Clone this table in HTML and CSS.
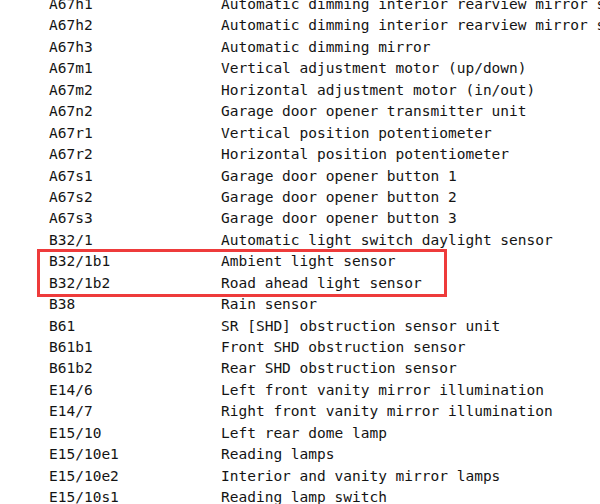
FILE: index.html
```html
<!DOCTYPE html>
<html>
<head>
<meta charset="utf-8">
<link rel="stylesheet" href="styles.css">
</head>
<body>
<div class="list">
  <div class="row"><span class="code">A67h1</span><span class="desc">Automatic dimming interior rearview mirror switch</span></div>
  <div class="row"><span class="code">A67h2</span><span class="desc">Automatic dimming interior rearview mirror sensor</span></div>
  <div class="row"><span class="code">A67h3</span><span class="desc">Automatic dimming mirror</span></div>
  <div class="row"><span class="code">A67m1</span><span class="desc">Vertical adjustment motor (up/down)</span></div>
  <div class="row"><span class="code">A67m2</span><span class="desc">Horizontal adjustment motor (in/out)</span></div>
  <div class="row"><span class="code">A67n2</span><span class="desc">Garage door opener transmitter unit</span></div>
  <div class="row"><span class="code">A67r1</span><span class="desc">Vertical position potentiometer</span></div>
  <div class="row"><span class="code">A67r2</span><span class="desc">Horizontal position potentiometer</span></div>
  <div class="row"><span class="code">A67s1</span><span class="desc">Garage door opener button 1</span></div>
  <div class="row"><span class="code">A67s2</span><span class="desc">Garage door opener button 2</span></div>
  <div class="row"><span class="code">A67s3</span><span class="desc">Garage door opener button 3</span></div>
  <div class="row"><span class="code">B32/1</span><span class="desc">Automatic light switch daylight sensor</span></div>
  <div class="group">
    <div class="row"><span class="code">B32/1b1</span><span class="desc">Ambient light sensor</span></div>
    <div class="row"><span class="code">B32/1b2</span><span class="desc">Road ahead light sensor</span></div>
  </div>
  <div class="row"><span class="code">B38</span><span class="desc">Rain sensor</span></div>
  <div class="row"><span class="code">B61</span><span class="desc">SR [SHD] obstruction sensor unit</span></div>
  <div class="row"><span class="code">B61b1</span><span class="desc">Front SHD obstruction sensor</span></div>
  <div class="row"><span class="code">B61b2</span><span class="desc">Rear SHD obstruction sensor</span></div>
  <div class="row"><span class="code">E14/6</span><span class="desc">Left front vanity mirror illumination</span></div>
  <div class="row"><span class="code">E14/7</span><span class="desc">Right front vanity mirror illumination</span></div>
  <div class="row"><span class="code">E15/10</span><span class="desc">Left rear dome lamp</span></div>
  <div class="row"><span class="code">E15/10e1</span><span class="desc">Reading lamps</span></div>
  <div class="row"><span class="code">E15/10e2</span><span class="desc">Interior and vanity mirror lamps</span></div>
  <div class="row"><span class="code">E15/10s1</span><span class="desc">Reading lamp switch</span></div>
</div>
</body>
</html>
```
FILE: styles.css
```css
html, body {
  margin: 0;
  padding: 0;
  background: #ffffff;
  overflow: hidden;
  width: 600px;
  height: 504px;
}
.list {
  margin-top: -6px;
  padding-left: 49px;
  font-family: "DejaVu Sans Mono", "Liberation Mono", monospace;
  font-size: 14.5px;
  line-height: 21.45px;
  color: #141414;
  white-space: nowrap;
}
.row {
  display: flex;
  height: 21.45px;
}
.code {
  flex: 0 0 172px;
}
.desc {
  flex: 0 0 auto;
}
.group {
  position: relative;
}
.group::after {
  content: "";
  position: absolute;
  left: -12px;
  top: -2px;
  width: 410px;
  height: 48px;
  box-sizing: border-box;
  border: 3px solid #ee3b3b;
  pointer-events: none;
}
```
